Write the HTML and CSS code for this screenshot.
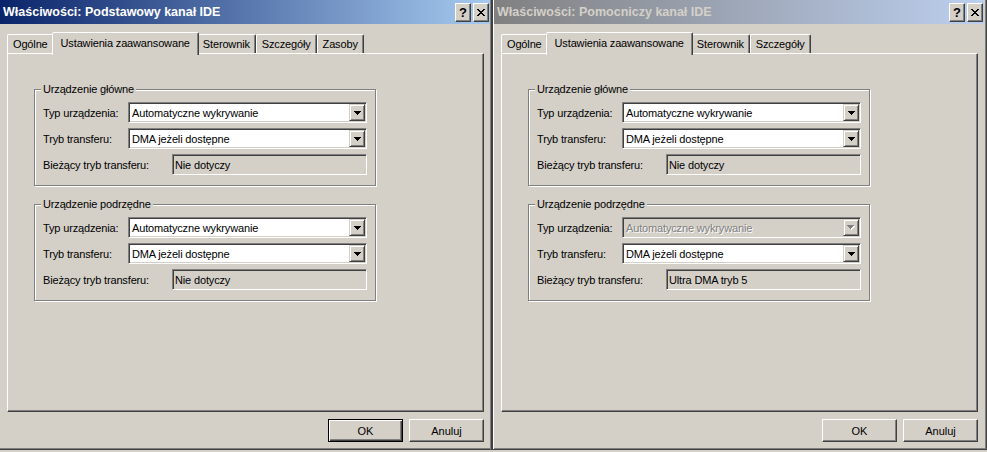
FILE: index.html
```html
<!DOCTYPE html>
<html lang="pl">
<head>
    <meta charset="UTF-8">
    <title>Właściwości kanału IDE</title>
    <link rel="stylesheet" href="styles.css">
</head>
<body>
<div class="desktop">

    <!-- Podstawowy kanal -->
    <div class="window window-a">
        <div class="titlebar active">
            <span class="caption">Właściwości: Podstawowy kanał IDE</span>
            <div class="caption-buttons">
                <span class="cap-btn">?</span>
                <span class="cap-btn"><svg width="8" height="7" viewBox="0 0 8 7"><path d="M0 0h2v1H0zM6 0h2v1H6zM1 1h2v1H1zM5 1h2v1H5zM2 2h4v1H2zM3 3h2v1H3zM2 4h4v1H2zM1 5h2v1H1zM5 5h2v1H5zM0 6h2v1H0zM6 6h2v1H6z"/></svg></span>
            </div>
        </div>
        <div class="client">
            <div class="tabs">
                <div class="tab">Ogólne</div>
                <div class="tab selected">Ustawienia zaawansowane</div>
                <div class="tab">Sterownik</div>
                <div class="tab">Szczegóły</div>
                <div class="tab">Zasoby</div>
            </div>
            <div class="panel">
                <div class="group">
                    <span class="group-title">Urządzenie główne</span>
                    <div class="row">
                        <span class="label">Typ urządzenia:</span>
                        <div class="combo"><span class="value">Automatyczne wykrywanie</span><span class="drop"><svg width="7" height="4" viewBox="0 0 7 4"><path d="M0 0h7v1H0zM1 1h5v1H1zM2 2h3v1H2zM3 3h1v1H3z"/></svg></span></div>
                    </div>
                    <div class="row">
                        <span class="label">Tryb transferu:</span>
                        <div class="combo"><span class="value">DMA jeżeli dostępne</span><span class="drop"><svg width="7" height="4" viewBox="0 0 7 4"><path d="M0 0h7v1H0zM1 1h5v1H1zM2 2h3v1H2zM3 3h1v1H3z"/></svg></span></div>
                    </div>
                    <div class="row readonly">
                        <span class="label">Bieżący tryb transferu:</span>
                        <div class="field">Nie dotyczy</div>
                    </div>
                </div>
                <div class="group">
                    <span class="group-title">Urządzenie podrzędne</span>
                    <div class="row">
                        <span class="label">Typ urządzenia:</span>
                        <div class="combo"><span class="value">Automatyczne wykrywanie</span><span class="drop"><svg width="7" height="4" viewBox="0 0 7 4"><path d="M0 0h7v1H0zM1 1h5v1H1zM2 2h3v1H2zM3 3h1v1H3z"/></svg></span></div>
                    </div>
                    <div class="row">
                        <span class="label">Tryb transferu:</span>
                        <div class="combo"><span class="value">DMA jeżeli dostępne</span><span class="drop"><svg width="7" height="4" viewBox="0 0 7 4"><path d="M0 0h7v1H0zM1 1h5v1H1zM2 2h3v1H2zM3 3h1v1H3z"/></svg></span></div>
                    </div>
                    <div class="row readonly">
                        <span class="label">Bieżący tryb transferu:</span>
                        <div class="field">Nie dotyczy</div>
                    </div>
                </div>
            </div>
            <div class="buttons">
                <button class="btn default">OK</button>
                <button class="btn">Anuluj</button>
            </div>
        </div>
    </div>

    <!-- Pomocniczy kanal -->
    <div class="window window-b">
        <div class="titlebar inactive">
            <span class="caption">Właściwości: Pomocniczy kanał IDE</span>
            <div class="caption-buttons">
                <span class="cap-btn">?</span>
                <span class="cap-btn"><svg width="8" height="7" viewBox="0 0 8 7"><path d="M0 0h2v1H0zM6 0h2v1H6zM1 1h2v1H1zM5 1h2v1H5zM2 2h4v1H2zM3 3h2v1H3zM2 4h4v1H2zM1 5h2v1H1zM5 5h2v1H5zM0 6h2v1H0zM6 6h2v1H6z"/></svg></span>
            </div>
        </div>
        <div class="client">
            <div class="tabs">
                <div class="tab">Ogólne</div>
                <div class="tab selected">Ustawienia zaawansowane</div>
                <div class="tab">Sterownik</div>
                <div class="tab">Szczegóły</div>
            </div>
            <div class="panel">
                <div class="group">
                    <span class="group-title">Urządzenie główne</span>
                    <div class="row">
                        <span class="label">Typ urządzenia:</span>
                        <div class="combo"><span class="value">Automatyczne wykrywanie</span><span class="drop"><svg width="7" height="4" viewBox="0 0 7 4"><path d="M0 0h7v1H0zM1 1h5v1H1zM2 2h3v1H2zM3 3h1v1H3z"/></svg></span></div>
                    </div>
                    <div class="row">
                        <span class="label">Tryb transferu:</span>
                        <div class="combo"><span class="value">DMA jeżeli dostępne</span><span class="drop"><svg width="7" height="4" viewBox="0 0 7 4"><path d="M0 0h7v1H0zM1 1h5v1H1zM2 2h3v1H2zM3 3h1v1H3z"/></svg></span></div>
                    </div>
                    <div class="row readonly">
                        <span class="label">Bieżący tryb transferu:</span>
                        <div class="field">Nie dotyczy</div>
                    </div>
                </div>
                <div class="group">
                    <span class="group-title">Urządzenie podrzędne</span>
                    <div class="row">
                        <span class="label">Typ urządzenia:</span>
                        <div class="combo disabled"><span class="value">Automatyczne wykrywanie</span><span class="drop"><svg width="8" height="5" viewBox="0 0 8 5"><path class="hl" d="M1 1h7v1H1zM2 2h5v1H2zM3 3h3v1H3zM4 4h1v1H4z"/><path d="M0 0h7v1H0zM1 1h5v1H1zM2 2h3v1H2zM3 3h1v1H3z"/></svg></span></div>
                    </div>
                    <div class="row">
                        <span class="label">Tryb transferu:</span>
                        <div class="combo"><span class="value">DMA jeżeli dostępne</span><span class="drop"><svg width="7" height="4" viewBox="0 0 7 4"><path d="M0 0h7v1H0zM1 1h5v1H1zM2 2h3v1H2zM3 3h1v1H3z"/></svg></span></div>
                    </div>
                    <div class="row readonly">
                        <span class="label">Bieżący tryb transferu:</span>
                        <div class="field">Ultra DMA tryb 5</div>
                    </div>
                </div>
            </div>
            <div class="buttons">
                <button class="btn">OK</button>
                <button class="btn">Anuluj</button>
            </div>
        </div>
    </div>

</div>
</body>
</html>
```

FILE: styles.css
```css
* {
    box-sizing: border-box;
}
body {
    margin: 0;
    background: #d4d0c8;
    font-family: "Liberation Sans", Arial, sans-serif;
    font-size: 11px;
    letter-spacing: -0.15px;
    color: #000;
    overflow: hidden;
}
.desktop {
    display: flex;
    width: 987px;
    height: 452px;
}

/* window frames */
.window {
    display: flex;
    flex-direction: column;
    height: 450px;
    background: #d4d0c8;
    border-bottom: 1px solid #404040;
    box-shadow: inset 0 -1px #808080;
    flex: none;
}
.window-a {
    width: 491px;
    border-right: 1px solid #808080;
}
.window-b {
    width: 496px;
    border-left: 2px solid #404040;
    border-right: 1px solid #404040;
    padding: 0 2px 0 1px;
    box-shadow: inset 1px 0 #fff, inset -1px -1px #808080;
}

/* title bar */
.titlebar {
    height: 24px;
    display: flex;
    align-items: center;
    justify-content: space-between;
    padding: 0 1px 0 3px;
    flex: none;
}
.titlebar.active {
    background: linear-gradient(to right, #0a246a, #a6caf0);
    color: #fff;
}
.titlebar.inactive {
    background: linear-gradient(to right, #808080, #bccfef);
    color: #d4d0c8;
}
.caption {
    font-weight: bold;
    font-size: 12.5px;
    letter-spacing: 0;
    white-space: nowrap;
}
.caption-buttons {
    display: flex;
    gap: 2px;
}
.cap-btn {
    width: 16px;
    height: 19px;
    display: flex;
    align-items: center;
    justify-content: center;
    background: #d4d0c8;
    border: 1px solid;
    border-color: #fff #404040 #404040 #fff;
    box-shadow: inset -1px -1px #808080;
    color: #000;
    font-weight: bold;
    font-size: 13px;
    line-height: 1;
}

/* dialog client */
.client {
    display: flex;
    flex-direction: column;
    padding: 8px 6px 0 7px;
}
.tabs {
    display: flex;
    align-items: flex-end;
    height: 21px;
    position: relative;
    z-index: 1;
}
.tab {
    height: 19px;
    display: flex;
    align-items: center;
    padding: 0 5px;
    border: 1px solid;
    border-bottom: none;
    border-color: #fff #404040 transparent #fff;
    border-radius: 2px 2px 0 0;
    box-shadow: inset -1px 0 #808080;
    white-space: nowrap;
}
.tab.selected {
    position: relative;
    z-index: 2;
    height: 23px;
    margin: 0 -2px -2px;
    padding: 0 8px 2px;
    background: #d4d0c8;
}
.panel {
    height: 359px;
    border: 1px solid;
    border-color: #fff #404040 #404040 #fff;
    box-shadow: inset -1px -1px #808080;
    padding: 35px 0 0 26px;
}

/* group boxes */
.group {
    position: relative;
    width: 342px;
    display: flex;
    flex-direction: column;
    gap: 5px;
    padding: 12px 8px 10px 8px;
    border: 1px solid #808080;
    box-shadow: 1px 1px #fff, inset 1px 1px #fff;
}
.group + .group {
    margin-top: 18px;
}
.group-title {
    position: absolute;
    top: -8px;
    left: 6px;
    padding: 0 2px;
    line-height: 14px;
    background: #d4d0c8;
}
.row {
    display: flex;
    align-items: center;
    height: 21px;
}
.label {
    width: 85px;
    flex: none;
    white-space: nowrap;
}
.row.readonly .label {
    width: 129px;
}
.combo, .field {
    flex: 1;
    height: 21px;
    display: flex;
    align-items: center;
    padding: 1px;
    border: 1px solid;
    border-color: #808080 #fff #fff #808080;
    box-shadow: inset 1px 1px #404040, inset -1px -1px #d4d0c8;
    white-space: nowrap;
}
.combo {
    background: #fff;
}
.combo .value {
    flex: 1;
    padding-left: 2px;
}
.combo.disabled {
    background: #d4d0c8;
    color: #808080;
    text-shadow: 1px 1px #fff;
}
.field {
    background: #d4d0c8;
    padding-left: 2px;
}
.drop {
    width: 16px;
    height: 17px;
    flex: none;
    display: flex;
    align-items: center;
    justify-content: center;
    background: #d4d0c8;
    border: 1px solid;
    border-color: #d4d0c8 #404040 #404040 #d4d0c8;
    box-shadow: inset 1px 1px #fff, inset -1px -1px #808080;
}
.drop svg {
    fill: #000;
}
.combo.disabled .drop svg {
    fill: #808080;
}
.combo.disabled .drop .hl {
    fill: #fff;
}

/* dialog buttons */
.buttons {
    display: flex;
    justify-content: flex-end;
    gap: 6px;
    margin-top: 7px;
}
.btn {
    width: 75px;
    height: 23px;
    padding: 0;
    font-family: "Liberation Sans", Arial, sans-serif;
    font-size: 11px;
    color: #000;
    background: #d4d0c8;
    border: 1px solid;
    border-color: #fff #404040 #404040 #fff;
    box-shadow: inset -1px -1px #808080;
}
.btn.default {
    border-color: #000;
    box-shadow: inset 1px 1px #fff, inset -1px -1px #404040, inset -2px -2px #808080;
}
```
